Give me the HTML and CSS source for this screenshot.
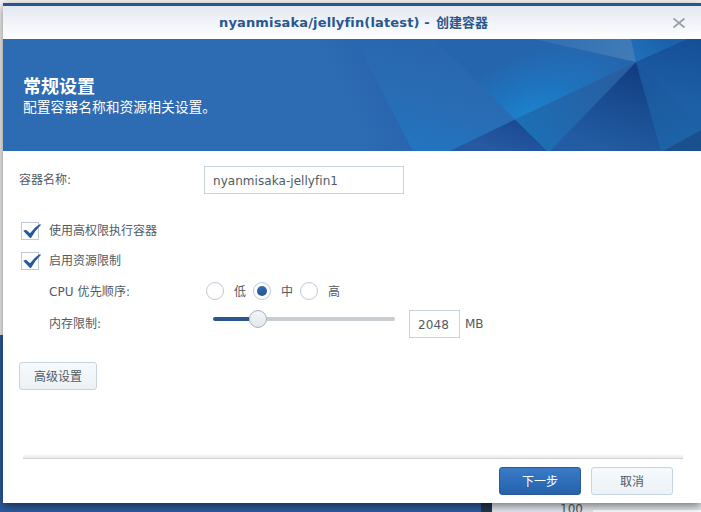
FILE: index.html
```html
<!DOCTYPE html>
<html lang="zh-CN">
<head>
<meta charset="utf-8">
<title>创建容器</title>
<link rel="stylesheet" href="styles.css">
</head>
<body>
<div class="desktop">
  <div class="panel-behind"></div>
  <div class="chart-behind"><span class="tick">100</span><span class="plot"></span></div>
</div>
<main class="window">
  <header class="titlebar">
    <h1 class="title"><span class="title-name">nyanmisaka/jellyfin(latest) -</span> <span class="title-action">创建容器</span></h1>
    <svg class="close" viewBox="0 0 12 10" width="12" height="10"><path d="M.5 .5L11.5 9.5M11.5 .5L.5 9.5" stroke="#9ba0a5" stroke-width="1.8" fill="none"/></svg>
  </header>
  <section class="banner">
    <svg class="facets" viewBox="3 39 698 112" width="698" height="112" preserveAspectRatio="none">
      <defs>
        <linearGradient id="a" gradientUnits="userSpaceOnUse" x1="347" y1="115" x2="392" y2="93"><stop offset="0" stop-color="#2d6bb3"/><stop offset="1" stop-color="#2865ae"/></linearGradient>
        <linearGradient id="b" gradientUnits="userSpaceOnUse" x1="430" y1="39" x2="400" y2="151"><stop offset="0" stop-color="#2866ae"/><stop offset=".5" stop-color="#296cb4"/><stop offset="1" stop-color="#2275c1"/></linearGradient>
        <radialGradient id="c" gradientUnits="userSpaceOnUse" cx="0" cy="0" r="1" gradientTransform="translate(528 118) rotate(-25) scale(115 62)"><stop offset="0" stop-color="#1b84cd"/><stop offset=".45" stop-color="#1e74be"/><stop offset="1" stop-color="#2565ad"/></radialGradient>
        <linearGradient id="d" gradientUnits="userSpaceOnUse" x1="550" y1="39" x2="636" y2="62"><stop offset="0" stop-color="#3270b4"/><stop offset="1" stop-color="#417cb7"/></linearGradient>
        <linearGradient id="e" gradientUnits="userSpaceOnUse" x1="636" y1="62" x2="665" y2="39"><stop offset="0" stop-color="#2070b9"/><stop offset="1" stop-color="#1a62ab"/></linearGradient>
        <linearGradient id="f" gradientUnits="userSpaceOnUse" x1="690" y1="40" x2="680" y2="105"><stop offset="0" stop-color="#154f97"/><stop offset="1" stop-color="#1e60a6"/></linearGradient>
        <linearGradient id="g" gradientUnits="userSpaceOnUse" x1="636" y1="62" x2="675" y2="140"><stop offset="0" stop-color="#1a559c"/><stop offset="1" stop-color="#1e62a6"/></linearGradient>
        <linearGradient id="i" gradientUnits="userSpaceOnUse" x1="636" y1="62" x2="610" y2="151"><stop offset="0" stop-color="#103b80"/><stop offset=".5" stop-color="#1a4d92"/><stop offset="1" stop-color="#225ca2"/></linearGradient>
        <linearGradient id="j" gradientUnits="userSpaceOnUse" x1="636" y1="62" x2="535" y2="140"><stop offset="0" stop-color="#2a5c9d"/><stop offset=".5" stop-color="#2464a8"/><stop offset="1" stop-color="#1d6eb4"/></linearGradient>
        <linearGradient id="k" gradientUnits="userSpaceOnUse" x1="510" y1="120" x2="500" y2="151"><stop offset="0" stop-color="#1b4a94"/><stop offset="1" stop-color="#2659a2"/></linearGradient>
      </defs>
      <path fill="url(#a)" d="M310 39H355L413 151H310Z"/>
      <path fill="url(#b)" d="M355 39H434L516 120L450 151H413Z"/>
      <path fill="url(#c)" d="M434 39H534L636 62L515 119.5Z"/>
      <path fill="url(#d)" d="M534 39H631L636 62Z"/>
      <path fill="url(#e)" d="M631 39H687L636 62Z"/>
      <path fill="url(#f)" d="M687 39H701V126L636 62Z"/>
      <path fill="url(#g)" d="M636 62L701 124V130L663 151H660Z"/>
      <path fill="#1b508f" d="M701 130V151H663Z"/>
      <path fill="url(#k)" d="M450 151L515 119.5L549 151Z"/>
      <path fill="url(#j)" d="M636 62L515 119.5L547 151H550Z"/>
      <path fill="url(#i)" d="M636 62L661 151H550Z"/>
    </svg>
    <h2 class="heading">常规设置</h2>
    <p class="subheading">配置容器名称和资源相关设置。</p>
  </section>
  <form class="form">
    <div class="row name-row"><label class="label">容器名称:</label><div class="input name-input">nyanmisaka-jellyfin1</div></div>
    <div class="row check-row"><span class="checkbox"><svg viewBox="0 0 20 18" width="20" height="18"><path class="tick-mark" d="M1.2 7.8L4 6.8L8 10.2Q12.5 4.5 17 1.5H19.3Q13 7.5 9 15H8Z"/></svg></span><label>使用高权限执行容器</label></div>
    <div class="row check-row"><span class="checkbox"><svg viewBox="0 0 20 18" width="20" height="18"><path class="tick-mark" d="M1.2 7.8L4 6.8L8 10.2Q12.5 4.5 17 1.5H19.3Q13 7.5 9 15H8Z"/></svg></span><label>启用资源限制</label></div>
    <div class="row cpu-row">
      <label class="label sub">CPU 优先顺序:</label>
      <span class="radio"></span><span class="option">低</span>
      <span class="radio selected"></span><span class="option">中</span>
      <span class="radio"></span><span class="option">高</span>
    </div>
    <div class="row memory-row">
      <label class="label sub">内存限制:</label>
      <div class="slider"><span class="fill"></span><span class="thumb"></span><span class="rest"></span></div>
      <div class="input memory-input">2048</div><span class="unit">MB</span>
    </div>
    <div class="button advanced">高级设置</div>
  </form>
  <footer class="footer">
    <div class="button primary">下一步</div>
    <div class="button">取消</div>
  </footer>
</main>
</body>
</html>
```
FILE: styles.css
```css
* { box-sizing: border-box; }
html, body { margin: 0; height: 512px; overflow: hidden; }
body {
  position: relative;
  font: 12px/18px "DejaVu Sans", "Noto Sans CJK SC", sans-serif;
  color: #505a64;
  background: #2d5b9f;
}
h1, h2, p { margin: 0; font-weight: normal; }

.desktop {
  position: absolute;
  inset: 0;
  display: flex;
  flex-direction: column;
  justify-content: space-between;
}
.panel-behind { height: 335px; background: #f4f4f4; }
.chart-behind {
  display: flex;
  align-self: flex-end;
  width: 220px;
  height: 12px;
  overflow: hidden;
  border-left: 11px solid #25374f;
  background: #e5e9ef;
}
.tick {
  width: 90px;
  padding-left: 68px;
  font: 12px/14px "DejaVu Sans", sans-serif;
  margin-top: 2px;
  white-space: nowrap;
}
.plot { flex: 1; margin: 10px 0 0 11px; background: #fff; }

.window {
  position: relative;
  display: flex;
  flex-direction: column;
  width: 698px;
  height: 500px;
  margin: 3px 0 0 3px;
  background: #fff;
  box-shadow: 0 3px 9px rgba(0, 0, 0, .5);
}
.titlebar {
  display: grid;
  grid-template-columns: 1fr 12px;
  align-items: center;
  height: 36px;
  border-top: 3px solid #29558f;
  padding-right: 16px;
  background: linear-gradient(#e3e8f1, #fff);
}
.title {
  display: flex;
  gap: 3px;
  padding-left: 216px;
  color: #29578f;
  font-weight: bold;
  white-space: nowrap;
}
.title-name { width: 214px; font-size: 13px; letter-spacing: .15px; }
.title-action { font-size: 13px; }
.close { display: block; }

.banner {
  display: grid;
  grid-template-rows: 36px 21px 20px;
  height: 112px;
  background: #2d6bb3;
  color: #fff;
}
.facets { grid-area: 1 / 1; }
.heading {
  grid-area: 2 / 1;
  z-index: 1;
  padding-left: 20px;
  font: bold 18px/21px "Noto Sans CJK SC", sans-serif;
}
.subheading {
  grid-area: 3 / 1;
  z-index: 1;
  padding-left: 20px;
  font: 13.8px/20px "Noto Sans CJK SC", sans-serif;
}

.form { flex: 1; padding: 15px 16px 0; }
.row { display: flex; align-items: center; }
.label { width: 185px; }
.sub { padding-left: 30px; }
.input {
  height: 28px;
  padding: 1px 8px 0;
  border: 1px solid #c6d4e0;
  line-height: 26px;
  background: #fff;
}
.name-row { height: 28px; margin-bottom: 22px; }
.name-input { width: 200px; letter-spacing: .05px; }
.check-row { height: 30px; padding-left: 2px; gap: 10px; }
.checkbox {
  width: 18px;
  height: 18px;
  border: 1px solid #c1c9d8;
}
.checkbox svg { display: block; }
.tick-mark { fill: #29589a; }
.cpu-row { height: 30px; }
.cpu-row .label { letter-spacing: .1px; }
.cpu-row .label, .memory-row .label { padding-top: 1px; }
.radio {
  display: grid;
  place-items: center;
  width: 18px;
  height: 18px;
  margin-left: 2px;
  border: 1px solid #c1c9d8;
  border-radius: 50%;
}
.option { width: 27px; padding: 1px 0 0 10px; white-space: nowrap; }
.selected::after {
  content: "";
  width: 10px;
  height: 10px;
  border-radius: 50%;
  background: linear-gradient(#3270b5, #27558e);
}
.memory-row { height: 34px; padding-top: 2px; }
.memory-row .label { padding-top: 0; margin-top: -1px; }
.slider {
  display: flex;
  align-items: center;
  width: 182px;
  height: 18px;
  margin: -11px 14px 0 9px;
}
.fill { width: 36px; height: 4px; border-radius: 2px 0 0 2px; background: #2a568e; }
.thumb {
  width: 18px;
  height: 18px;
  border: 1px solid #a6b1c0;
  border-radius: 50%;
  background: linear-gradient(#f3f6f9, #e2e8ed);
}
.rest { flex: 1; height: 4px; border-radius: 0 2px 2px 0; background: #c8cdd1; }
.memory-input { width: 51px; letter-spacing: .1px; }
.unit { margin-left: 5px; }

.button {
  width: 82px;
  height: 28px;
  border: 1px solid #c6d4e0;
  border-radius: 3px;
  text-align: center;
  line-height: 28px;
  background: linear-gradient(#f6fafd, #ebf1f6);
}
.advanced { width: 78px; margin-top: 22px; }
.primary {
  border-color: #2a5a98;
  color: #fff;
  background: linear-gradient(#3a7ac6, #2462ab);
}
.footer {
  display: flex;
  justify-content: flex-end;
  gap: 10px;
  height: 49px;
  margin: 0 18px 0 20px;
  padding: 13px 10px 0 0;
  background: linear-gradient(#fff, #e8e8e8 4px, #d2d2d2 4px, #d2d2d2 5px, #fff 5px);
}
```
